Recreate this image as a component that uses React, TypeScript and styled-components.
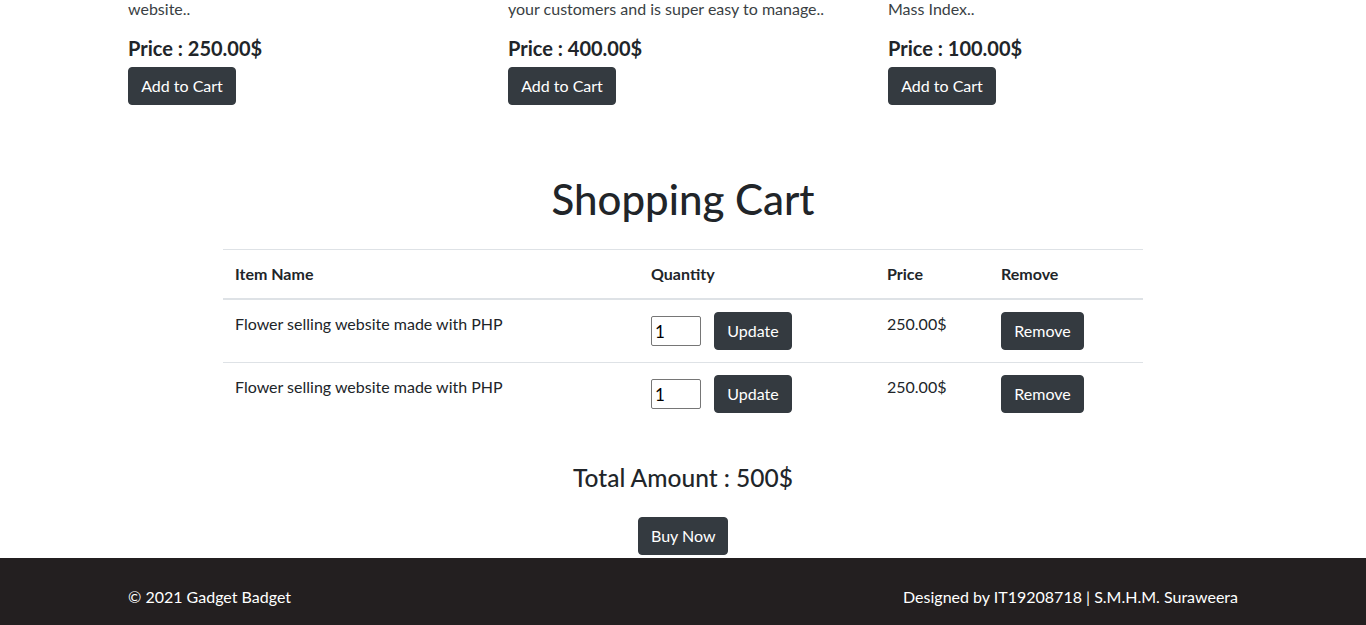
import React from "react";
import styled, { createGlobalStyle } from "styled-components";

const Global = createGlobalStyle`
  html, body { margin: 0; padding: 0; background: #fff; }
  body {
    font-family: Lato, "Liberation Sans", sans-serif;
    font-size: 16px;
    line-height: 1.5;
    color: #212529;
    overflow: hidden;
  }
  * { box-sizing: border-box; }
`;

const Page = styled.div`
  width: 1366px;
  height: 625px;
  overflow: hidden;
  display: flex;
  flex-direction: column;
`;

const Container = styled.div`
  width: 1140px;
  margin: 0 auto;
  padding: 0 15px;
`;

const ProductRow = styled.div`
  display: grid;
  grid-template-columns: repeat(3, 350px);
  column-gap: 30px;
  margin-top: -3px;
`;

const Card = styled.div`
  display: flex;
  flex-direction: column;
  align-items: flex-start;
`;

const Desc = styled.p`
  margin: 0 0 15px;
  color: #3a3f44;
  white-space: nowrap;
`;

const Price = styled.h5`
  margin: 0 0 7px;
  font-size: 20px;
  font-weight: 700;
  line-height: 1.2;
`;

const DarkButton = styled.button<{ $w?: number }>`
  font-family: inherit;
  font-size: 16px;
  line-height: 24px;
  height: 38px;
  padding: 6px 12px;
  background: #343a40;
  border: 1px solid #343a40;
  color: #fff;
  border-radius: 4px;
  white-space: nowrap;
  cursor: pointer;
  ${(p) => (p.$w ? `width: ${p.$w}px;` : "")}
`;

const Title = styled.h1`
  margin: 70px 0 26px;
  text-align: center;
  font-size: 42px;
  font-weight: 500;
  line-height: 48px;
`;

const TableWrap = styled.div`
  width: 920px;
  margin: 0 auto;
`;

const Table = styled.table`
  width: 100%;
  border-collapse: collapse;
  table-layout: fixed;
`;

const Th = styled.th<{ $w: number }>`
  width: ${(p) => p.$w}px;
  text-align: left;
  font-weight: 700;
  padding: 12px;
  line-height: 24px;
  border-top: 1px solid #dee2e6;
  border-bottom: 2px solid #dee2e6;
`;

const Td = styled.td`
  padding: 12px;
  vertical-align: top;
  line-height: 24px;
  border-top: 1px solid #dee2e6;
`;

const QtyCell = styled.div`
  display: flex;
  align-items: center;
  gap: 13px;
`;

const QtyInput = styled.input`
  width: 50px;
  height: 30px;
  font-family: inherit;
  font-size: 17px;
  padding: 1px 3px;
  border: 1px solid #767676;
  border-radius: 2px;
  color: #000;
`;

const Summary = styled.div`
  display: flex;
  flex-direction: column;
  align-items: center;
  margin-top: 38px;
  margin-bottom: 3px;
`;

const Total = styled.h4`
  margin: 0 0 25px;
  font-size: 24.5px;
  font-weight: 500;
  line-height: 29px;
`;

const Footer = styled.footer`
  background: #231f20;
  color: #fff;
  height: 70px;
  padding-top: 27px;
`;

const FooterRow = styled.div`
  display: flex;
  justify-content: space-between;
  line-height: 24px;
`;

const products = [
  { desc: "website..", price: "250.00" },
  { desc: "your customers and is super easy to manage..", price: "400.00" },
  { desc: "Mass Index..", price: "100.00" },
];

const items = [
  { name: "Flower selling website made with PHP", qty: 1, price: "250.00$" },
  { name: "Flower selling website made with PHP", qty: 1, price: "250.00$" },
];

export default function App() {
  return (
    <Page>
      <Global />
      <Container>
        <ProductRow>
          {products.map((p, i) => (
            <Card key={i}>
              <Desc>{p.desc}</Desc>
              <Price>Price : {p.price}$</Price>
              <DarkButton $w={108}>Add to Cart</DarkButton>
            </Card>
          ))}
        </ProductRow>
      </Container>
      <Title>Shopping Cart</Title>
      <TableWrap>
        <Table>
          <thead>
            <tr>
              <Th $w={416}>Item Name</Th>
              <Th $w={236}>Quantity</Th>
              <Th $w={114}>Price</Th>
              <Th $w={154}>Remove</Th>
            </tr>
          </thead>
          <tbody>
            {items.map((it, i) => (
              <tr key={i}>
                <Td>{it.name}</Td>
                <Td>
                  <QtyCell>
                    <QtyInput type="number" defaultValue={it.qty} />
                    <DarkButton $w={78}>Update</DarkButton>
                  </QtyCell>
                </Td>
                <Td>{it.price}</Td>
                <Td>
                  <DarkButton $w={83}>Remove</DarkButton>
                </Td>
              </tr>
            ))}
          </tbody>
        </Table>
      </TableWrap>
      <Summary>
        <Total>Total Amount : 500$</Total>
        <DarkButton $w={90}>Buy Now</DarkButton>
      </Summary>
      <Footer>
        <Container>
          <FooterRow>
            <span>© 2021 Gadget Badget</span>
            <span>Designed by IT19208718 | S.M.H.M. Suraweera</span>
          </FooterRow>
        </Container>
      </Footer>
    </Page>
  );
}
